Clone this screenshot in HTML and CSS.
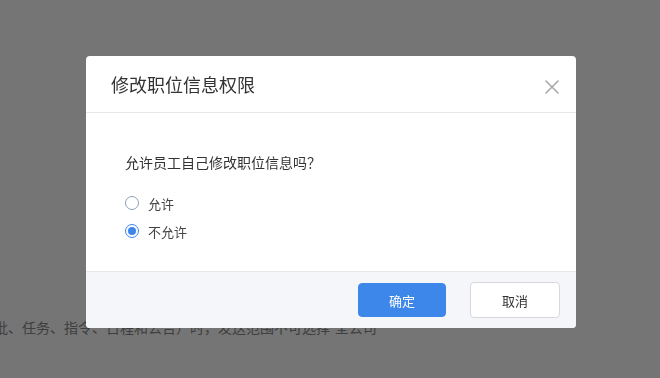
FILE: index.html
```html
<!DOCTYPE html>
<html lang="zh-CN">
<head>
<meta charset="utf-8">
<title>修改职位信息权限</title>
<link rel="stylesheet" href="styles.css">
</head>
<body>
<div class="page">
  <p class="hint">批、任务、指令、日程和公告）时，发送范围不可选择“全公司”</p>
</div>
<div class="mask"></div>
<div class="dialog" role="dialog">
  <div class="dialog-header">
    <h2 class="dialog-title">修改职位信息权限</h2>
    <button class="close" aria-label="关闭">
      <svg width="14" height="14" viewBox="0 0 14 14"><path d="M1 1L13 13M13 1L1 13" stroke="#a9a9a9" stroke-width="1.6" fill="none" stroke-linecap="round"/></svg>
    </button>
  </div>
  <div class="dialog-body">
    <p class="question">允许员工自己修改职位信息吗？</p>
    <div class="options">
      <label class="option"><span class="radio"></span><span class="label">允许</span></label>
      <label class="option"><span class="radio checked"></span><span class="label">不允许</span></label>
    </div>
  </div>
  <div class="dialog-footer">
    <button class="btn btn-primary">确定</button>
    <button class="btn btn-default">取消</button>
  </div>
</div>
</body>
</html>
```

FILE: styles.css
```css
* { box-sizing: border-box; }
html, body { margin: 0; padding: 0; }
body {
  width: 660px;
  height: 378px;
  overflow: hidden;
  background: #ffffff;
  font-family: "Liberation Sans", "Noto Sans CJK SC", sans-serif;
  color: #333;
}
.page {
  padding-top: 318px;
}
.hint {
  margin: 0;
  font-size: 14px;
  line-height: 20px;
  color: #8a8a8a;
  white-space: nowrap;
  text-indent: -6px;
}
.mask {
  position: fixed;
  inset: 0;
  background: rgba(0, 0, 0, 0.54);
}
.dialog {
  position: absolute;
  left: 86px;
  top: 56px;
  width: 490px;
  height: 272px;
  background: #fff;
  border-radius: 4px;
  overflow: hidden;
  display: flex;
  flex-direction: column;
}
.dialog-header {
  height: 57px;
  flex: none;
  padding: 3px 17px 0 25px;
  display: flex;
  align-items: center;
  justify-content: space-between;
  border-bottom: 1px solid #e6e7ea;
}
.dialog-title {
  margin: 0;
  font-size: 18px;
  font-weight: normal;
  line-height: 24px;
  color: #333;
}
.close {
  border: 0;
  background: none;
  padding: 0;
  width: 14px;
  height: 14px;
  margin-top: 2px;
  display: block;
  cursor: pointer;
}
.close svg { display: block; }
.dialog-body {
  flex: 1;
  padding: 39px 0 0 39px;
}
.question {
  margin: 0;
  font-family: "Noto Sans CJK SC", sans-serif;
  font-size: 14px;
  line-height: 20px;
  color: #333;
}
.options {
  margin-top: 21px;
  display: flex;
  flex-direction: column;
  gap: 8px;
}
.option {
  display: flex;
  align-items: center;
  height: 20px;
  font-size: 13px;
  color: #444;
}
.radio {
  width: 14px;
  height: 14px;
  border-radius: 50%;
  border: 1px solid #8fa0b5;
  margin-right: 9px;
  display: flex;
  align-items: center;
  justify-content: center;
  background: #fff;
}
.radio.checked {
  border-color: #3d87ea;
}
.radio.checked::after {
  content: "";
  width: 8px;
  height: 8px;
  border-radius: 50%;
  background: #3d87ea;
}
.dialog-footer {
  height: 57px;
  flex: none;
  border-top: 1px solid #e6e7ea;
  background: #f5f6f9;
  display: flex;
  align-items: center;
  justify-content: flex-end;
  gap: 24px;
  padding: 0 16px 0 0;
}
.btn {
  height: 34px;
  border-radius: 4px;
  font-family: inherit;
  font-size: 13px;
  padding: 0;
  cursor: pointer;
}
.btn-primary {
  width: 88px;
  background: #3d87ea;
  border: 1px solid #3d87ea;
  color: #fff;
}
.btn-default {
  width: 90px;
  height: 36px;
  background: #fff;
  border: 1px solid #d6d8dc;
  color: #333;
}
```
